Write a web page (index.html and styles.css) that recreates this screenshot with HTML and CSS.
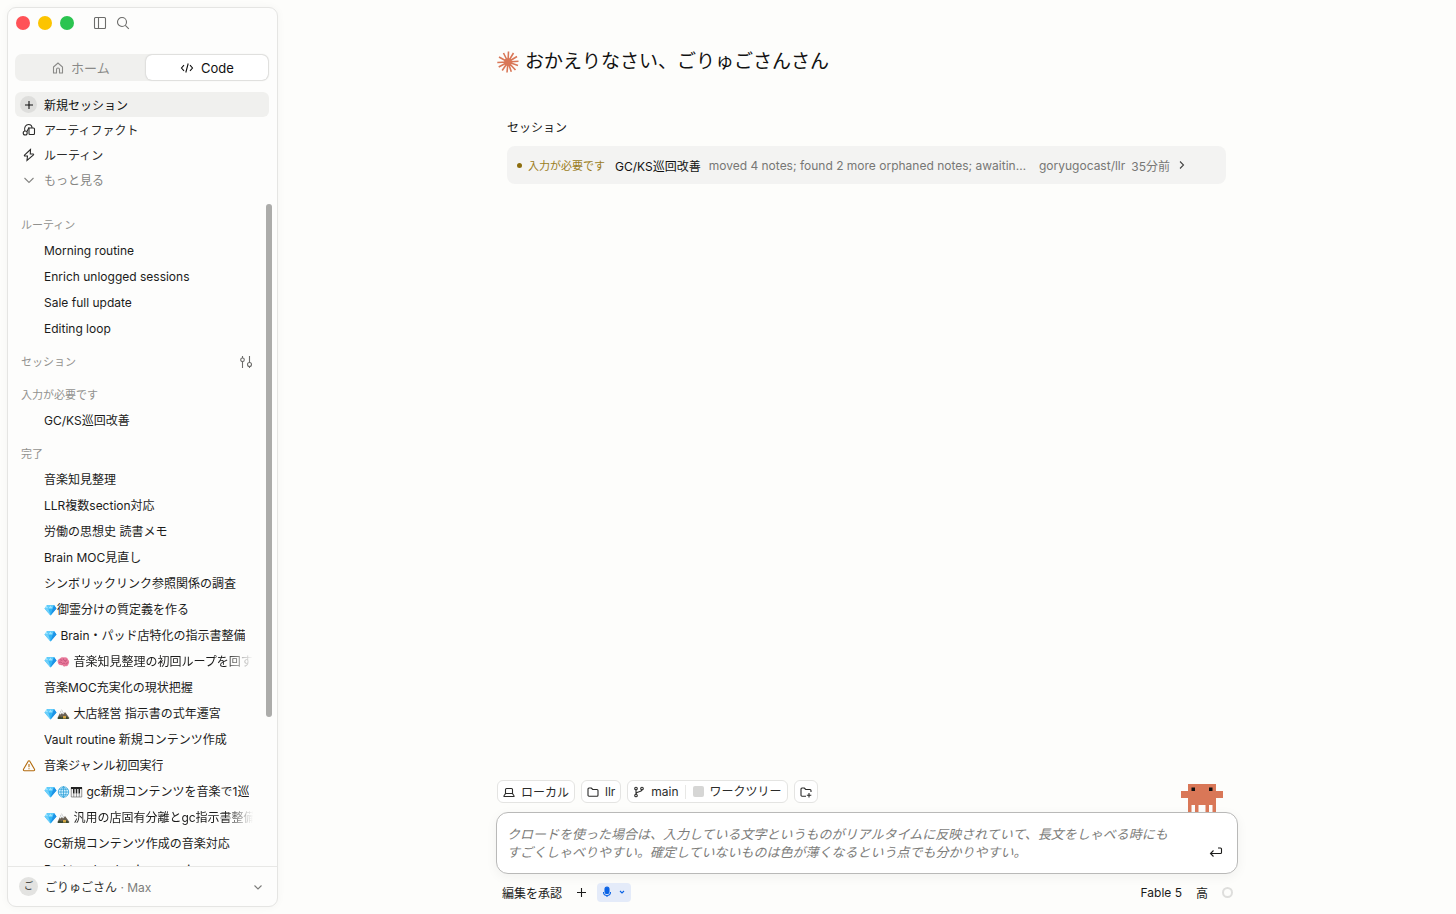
FILE: index.html
```html
<!DOCTYPE html>
<html lang="ja">
<head>
    <meta charset="UTF-8">
    <meta name="viewport" content="width=device-width, initial-scale=1.0">
    <title>Code</title>
    <link rel="stylesheet" href="styles.css">
</head>
<body>
    <!-- Shared emoji symbols -->
    <svg class="symbols" aria-hidden="true">
        <symbol id="gem" viewBox="0 0 24 24">
            <path fill="#31b5f5" d="M5 2h14l5 7L12 23 0 9z"/>
            <path fill="#9be4ff" d="M5 2l2.500 7H0zM12 2l4.500 7h-9z"/>
            <path fill="#62cdfb" d="M5 2h7L7.500 9zM12 2h7l-2.500 7z"/>
            <path fill="#1e93e6" d="M19 2l5 7h-7.500zM16.500 9H24L12 23z"/>
            <path fill="#6fd0fa" d="M0 9h7.500L12 23z"/>
        </symbol>
        <symbol id="brain" viewBox="0 0 24 24">
            <path fill="#e8799a" d="M1 14c-2-4 0-8 4-9 2-3 6-3 8-2 4-1 7 1 8 4 3 2 3 7 1 9-1 4-4 5-6 4-2 2-5 1-6-2-3 1-8 0-9-4z"/>
            <path fill="none" stroke="#b84870" stroke-width="1.500" d="M5 8c2-1 4 0 4 2M3 13c3-2 5 0 6 1M12 5c-1 3 1 4 3 4M19 8c-3 0-4 2-3 4M9 17c1-3 4-3 6-2M21 14c-2-1-4 0-4 3"/>
        </symbol>
        <symbol id="mountain" viewBox="0 0 24 24">
            <path fill="#6b6255" d="M0 20L8 3l5 8 2-3 9 12z"/>
            <path fill="#eef2f5" d="M8 3l5 8-2 2-2-3-3 3-2-1z"/>
            <path fill="#38472f" d="M0 22c2-6 6-6 8-3 4-5 10-4 16 3z"/>
            <path fill="#d2a544" d="M11 16h6v5h-6z"/>
        </symbol>
        <symbol id="globe" viewBox="0 0 24 24">
            <circle cx="12" cy="12" r="10.500" fill="#d5f2ff" stroke="#2a9fd8" stroke-width="1.500"/>
            <path fill="none" stroke="#2a9fd8" stroke-width="1.500" d="M12 1v22M1 12h22M3 6.500h18M3 17.500h18M12 1c-7 6-7 16 0 22M12 1c7 6 7 16 0 22"/>
        </symbol>
        <symbol id="piano" viewBox="0 0 24 24">
            <path fill="#f4f4f4" stroke="#444" d="M1.500 3h21v19h-21z"/>
            <path fill="#222" d="M1 2h22v4H1zM5 5h3v10H5zM10.500 5h3v10h-3zM16 5h3v10h-3z"/>
            <path stroke="#555" d="M6.500 15v7M12 15v7M17.500 15v7"/>
        </symbol>
    </svg>

    <div class="app">
        <aside class="sidebar">
            <div class="titlebar">
                <span class="light red"></span>
                <span class="light yellow"></span>
                <span class="light green"></span>
                <button class="icon-button panel-button" aria-label="サイドバー">
                    <svg width="14" height="14" viewBox="0 0 14 14"><rect x="1.500" y="1.500" width="11" height="11" rx="1"/><path d="M5.500 1.500v11"/></svg>
                </button>
                <button class="icon-button" aria-label="検索">
                    <svg width="14" height="14" viewBox="0 0 14 14"><circle cx="6" cy="6" r="4.500"/><path d="M9.300 9.300l3.500 3.500"/></svg>
                </button>
            </div>

            <div class="tabs">
                <button class="tab">
                    <svg width="12" height="12" viewBox="0 0 12 12"><path d="M1.500 5L6 1l4.500 4v6H7.500V7.500a1.500 1.500 0 0 0-3 0V11h-3z"/></svg>
                    ホーム
                </button>
                <button class="tab active">
                    <svg width="14" height="12" viewBox="0 0 14 12"><path d="M4 3.200L1.500 6 4 8.800M10 3.200L12.500 6 10 8.800M8.200 1.500L5.800 10.500"/></svg>
                    Code
                </button>
            </div>

            <nav class="nav">
                <a href="#" class="nav-item active">
                    <span class="nav-icon round"><svg width="10" height="10" viewBox="0 0 10 10"><path d="M5 1v8M1 5h8"/></svg></span>
                    新規セッション
                </a>
                <a href="#" class="nav-item">
                    <span class="nav-icon"><svg width="14" height="14" viewBox="0 0 14 14"><circle cx="3.200" cy="10" r="2"/><path d="M2.800 8C1.800 4 4 1.500 6.500 1.500S10 3 10 5M4.800 8.800L7 4.500"/><path d="M7 5h4.500a1 1 0 0 1 1 1v4.500a1 1 0 0 1-1 1H8a1 1 0 0 1-1-1z"/></svg></span>
                    アーティファクト
                </a>
                <a href="#" class="nav-item">
                    <span class="nav-icon"><svg width="14" height="14" viewBox="0 0 14 14"><path d="M8.500 1.500L2.500 7.200c-.3.300-.1.800.3.800h2.700L5 12.500l6.500-5.700c.3-.3.100-.8-.3-.8H8.300z"/></svg></span>
                    ルーティン
                </a>
                <button class="nav-item more">
                    <span class="nav-icon"><svg width="12" height="12" viewBox="0 0 12 12"><path d="M1.500 4L6 8.500 10.500 4"/></svg></span>
                    もっと見る
                </button>
            </nav>

            <div class="history">
                <div class="history-list">
                    <h2 class="group-title">ルーティン</h2>
                    <a href="#" class="entry"><span>Morning routine</span></a>
                    <a href="#" class="entry"><span>Enrich unlogged sessions</span></a>
                    <a href="#" class="entry"><span>Sale full update</span></a>
                    <a href="#" class="entry"><span>Editing loop</span></a>

                    <div class="group-header">
                        <h2 class="group-title">セッション</h2>
                        <button class="icon-button" aria-label="フィルター">
                            <svg width="14" height="14" viewBox="0 0 14 14"><path d="M3.500 1v2M3.500 6.500V13M10.500 1v6.500M10.500 11.500V13"/><circle cx="3.500" cy="4.800" r="1.800"/><circle cx="10.500" cy="9.500" r="2"/></svg>
                        </button>
                    </div>

                    <h3 class="group-title">入力が必要です</h3>
                    <a href="#" class="entry"><span>GC/KS巡回改善</span></a>

                    <h3 class="group-title">完了</h3>
                    <a href="#" class="entry"><span>音楽知見整理</span></a>
                    <a href="#" class="entry"><span>LLR複数section対応</span></a>
                    <a href="#" class="entry"><span>労働の思想史 読書メモ</span></a>
                    <a href="#" class="entry"><span>Brain MOC見直し</span></a>
                    <a href="#" class="entry"><span>シンボリックリンク参照関係の調査</span></a>
                    <a href="#" class="entry"><span><svg class="emoji"><use href="#gem"/></svg>御霊分けの質定義を作る</span></a>
                    <a href="#" class="entry"><span><svg class="emoji"><use href="#gem"/></svg> Brain・パッド店特化の指示書整備</span></a>
                    <a href="#" class="entry fade"><span><svg class="emoji"><use href="#gem"/></svg><svg class="emoji"><use href="#brain"/></svg> 音楽知見整理の初回ループを回す</span></a>
                    <a href="#" class="entry"><span>音楽MOC充実化の現状把握</span></a>
                    <a href="#" class="entry"><span><svg class="emoji"><use href="#gem"/></svg><svg class="emoji"><use href="#mountain"/></svg> 大店経営 指示書の式年遷宮</span></a>
                    <a href="#" class="entry"><span>Vault routine 新規コンテンツ作成</span></a>
                    <a href="#" class="entry">
                        <svg class="warning" width="14" height="14" viewBox="0 0 14 14"><path d="M6.200 2.200a1 1 0 0 1 1.600 0l4.700 8a1 1 0 0 1-.8 1.500H2.300a1 1 0 0 1-.8-1.500zM7 5v3.200M7 9.200v1"/></svg>
                        <span>音楽ジャンル初回実行</span>
                    </a>
                    <a href="#" class="entry"><span><svg class="emoji"><use href="#gem"/></svg><svg class="emoji"><use href="#globe"/></svg><svg class="emoji"><use href="#piano"/></svg> gc新規コンテンツを音楽で1巡</span></a>
                    <a href="#" class="entry fade"><span><svg class="emoji"><use href="#gem"/></svg><svg class="emoji"><use href="#mountain"/></svg> 汎用の店固有分離とgc指示書整備</span></a>
                    <a href="#" class="entry"><span>GC新規コンテンツ作成の音楽対応</span></a>
                    <a href="#" class="entry"><span>Pad teacher business review</span></a>
                </div>
                <div class="scroll-thumb"></div>
            </div>

            <button class="account">
                <span class="avatar">ご</span>
                <span>ごりゅごさん <span class="plan">· Max</span></span>
                <svg width="10" height="10" viewBox="0 0 10 10"><path d="M1.500 3.500L5 7l3.500-3.500"/></svg>
            </button>
        </aside>

        <main class="main">
            <div class="column">
                <h1 class="greeting">
                    <svg width="22" height="22" viewBox="-11 -11 22 22">
                        <circle r="3"/>
                        <path d="M0 0L.5-10.500M0 0L5.500-9M0 0L9-5.500M0 0L10.500-.8M0 0L10 3.500M0 0L7.500 8M0 0L3.300 9.800M0 0L-1 10.500M0 0L-5.800 8.500M0 0L-9.300 5M0 0L-10.700.5M0 0L-9-5M0 0L-4.500-9"/>
                    </svg>
                    おかえりなさい、ごりゅごさんさん
                </h1>

                <section class="sessions">
                    <h2>セッション</h2>
                    <a href="#" class="session-card">
                        <span class="dot"></span>
                        <span class="session-status">入力が必要です</span>
                        <span class="session-name">GC/KS巡回改善</span>
                        <span class="session-summary">moved 4 notes; found 2 more orphaned notes; awaitin…</span>
                        <span class="session-meta">goryugocast/llr</span>
                        <span class="session-meta">35分前</span>
                        <svg width="8" height="10" viewBox="0 0 8 10"><path d="M2 1.500L5.500 5 2 8.500"/></svg>
                    </a>
                </section>

                <form class="composer">
                    <div class="chips">
                        <button type="button" class="chip">
                            <svg width="12" height="12" viewBox="0 0 12 12"><path d="M2.500 7.500v-4a1 1 0 0 1 1-1h5a1 1 0 0 1 1 1v4l1.500 2.300v.7H1v-.7zM2.500 7.500h7"/></svg>
                            ローカル
                        </button>
                        <button type="button" class="chip">
                            <svg width="12" height="12" viewBox="0 0 12 12"><path d="M1 3a1 1 0 0 1 1-1h2.300L5.700 3.500H10a1 1 0 0 1 1 1v4.700a1 1 0 0 1-1 1H2a1 1 0 0 1-1-1z"/></svg>
                            llr
                        </button>
                        <div class="chip">
                            <button type="button" class="branch">
                                <svg width="12" height="12" viewBox="0 0 12 12"><circle cx="3" cy="2.500" r="1.300"/><circle cx="9" cy="2.500" r="1.300"/><circle cx="3" cy="9.500" r="1.300"/><path d="M3 3.800v4.400M9 3.800C9 6.500 3 5 3 8"/></svg>
                                main
                            </button>
                            <label class="worktree"><input type="checkbox"> ワークツリー</label>
                        </div>
                        <button type="button" class="chip" aria-label="フォルダーを追加">
                            <svg width="12" height="12" viewBox="0 0 12 12"><path d="M6 10.200H2a1 1 0 0 1-1-1V3a1 1 0 0 1 1-1h2.300L5.700 3.500H10a1 1 0 0 1 1 1V6M9 7v4.500M6.800 9.200h4.500"/></svg>
                        </button>
                        <svg class="mascot" width="42" height="28" viewBox="0 0 12 8">
                            <path fill="#d97757" d="M2 0h8v2h2v2h-2v4H9V6H8v2H7V6H5v2H4V6H3v2H2V4H0V2h2z"/>
                            <path fill="#111" d="M3 1h1v1H3zM8 1h1v1H8z"/>
                        </svg>
                    </div>

                    <div class="prompt">
                        <textarea rows="2" aria-label="プロンプト">クロードを使った場合は、入力している文字というものがリアルタイムに反映されていて、長文をしゃべる時にもすごくしゃべりやすい。確定していないものは色が薄くなるという点でも分かりやすい。</textarea>
                        <button class="send" aria-label="送信">
                            <svg width="14" height="14" viewBox="0 0 14 14"><path d="M9 3h2.500a1 1 0 0 1 1 1v3.500a1 1 0 0 1-1 1h-10M4.500 5.500l-3 3 3 3"/></svg>
                        </button>
                    </div>

                    <div class="toolbar">
                        <button type="button">編集を承認</button>
                        <button type="button" aria-label="追加"><svg width="11" height="11" viewBox="0 0 11 11"><path d="M5.500 1v9M1 5.500h9"/></svg></button>
                        <button type="button" class="mic" aria-label="音声入力">
                            <svg width="10" height="12" viewBox="0 0 10 12"><rect x="3" y="1" width="4" height="6.500" rx="2" fill="#0b63e5"/><path d="M1.500 6a3.500 3.500 0 0 0 7 0M5 9.500V11"/></svg>
                            <svg width="8" height="8" viewBox="0 0 8 8"><path d="M2 3l2 2 2-2"/></svg>
                        </button>
                        <button type="button" class="model">Fable 5</button>
                        <button type="button" class="effort">高</button>
                        <span class="usage"></span>
                    </div>
                </form>
            </div>
        </main>
    </div>
</body>
</html>
```
FILE: styles.css
```css
* {
    box-sizing: border-box;
}
body {
    margin: 0;
    font-family: Inter, "Noto Sans CJK JP", sans-serif;
    font-size: 12px;
    color: #1b1b1a;
    background-color: #fdfdfb;
}
button {
    font: inherit;
    color: inherit;
    background: none;
    border: none;
    padding: 0;
    cursor: pointer;
}
a {
    color: inherit;
    text-decoration: none;
}
h1, h2, h3 {
    margin: 0;
    font-weight: normal;
}
svg {
    flex-shrink: 0;
    fill: none;
    stroke: currentColor;
    stroke-width: 1.1;
}
.symbols {
    position: absolute;
    width: 0;
    height: 0;
}
.app {
    display: flex;
    height: 100vh;
}

/* Sidebar */
.sidebar {
    display: flex;
    flex-direction: column;
    width: 271px;
    flex-shrink: 0;
    margin: 7px 0 7px 7px;
    border: 1px solid #e5e5e3;
    border-radius: 9px;
    background-color: #fdfdfc;
    box-shadow: 0 0 8px rgba(0,0,0,0.04);
    overflow: hidden;
}
.titlebar {
    display: flex;
    align-items: center;
    gap: 8px;
    height: 30px;
    padding-left: 8px;
}
.light {
    width: 14px;
    height: 14px;
    border-radius: 50%;
}
.red {
    background-color: #ff5257;
}
.yellow {
    background-color: #fcc400;
}
.green {
    background-color: #2bc450;
}
.icon-button {
    display: flex;
    color: #6c6c6a;
}
.panel-button {
    margin: 0 1px 0 11px;
}
.tabs {
    display: grid;
    grid-template-columns: 17fr 16fr;
    margin: 16px 8px 0 7px;
    padding: 1px;
    border-radius: 7px;
    background-color: #f0f0ee;
    font-size: 13px;
}
.tab {
    display: flex;
    align-items: center;
    justify-content: center;
    gap: 7px;
    height: 25px;
    border-radius: 6px;
    color: #8a8a88;
}
.tab.active {
    color: #111;
    background-color: #fff;
    box-shadow: 0 0 2px rgba(0,0,0,0.25);
}
.nav {
    margin: 11px 8px 0 7px;
}
.nav-item {
    display: flex;
    align-items: center;
    gap: 7px;
    width: 100%;
    height: 25px;
    padding-left: 5px;
    border-radius: 6px;
    color: #2b2b2a;
}
.nav-item.active {
    color: #111;
    background-color: #f0f0ee;
}
.nav-item.more {
    color: #858583;
}
.nav-icon {
    display: flex;
    align-items: center;
    justify-content: center;
    width: 17px;
    height: 17px;
}
.round {
    border-radius: 50%;
    background-color: #dededc;
}
.history {
    position: relative;
    flex: 1;
    min-height: 0;
    margin-top: 8px;
}
.history-list {
    height: 100%;
    padding: 12px 24px 0 13px;
    overflow: hidden;
}
.scroll-thumb {
    position: absolute;
    top: 4px;
    right: 5px;
    width: 6px;
    height: 77%;
    border-radius: 3px;
    background-color: #acacaa;
}
.group-title {
    height: 26px;
    font-size: 11px;
    line-height: 26px;
    color: #92928f;
}
.entry + .group-title, .entry + .group-header, .group-header + .group-title {
    margin-top: 7px;
}
.group-header {
    display: flex;
    align-items: center;
    justify-content: space-between;
}
.entry {
    display: flex;
    align-items: center;
    position: relative;
    height: 26px;
    padding-left: 23px;
    line-height: 26px;
    white-space: nowrap;
}
.entry span {
    overflow: hidden;
}
.fade span {
    -webkit-mask-image: linear-gradient(to left, transparent, #000 28px);
    mask-image: linear-gradient(to left, transparent, #000 28px);
}
.emoji {
    width: 13px;
    height: 12px;
    vertical-align: -2px;
    stroke: none;
}
.warning {
    position: absolute;
    left: 1px;
    color: #b26a0c;
}
.account {
    display: flex;
    align-items: center;
    gap: 7px;
    height: 40px;
    padding: 0 14px 0 11px;
    border-top: 1px solid #e8e8e6;
    color: #2b2b2a;
}
.account svg {
    margin-left: auto;
    color: #7d7d7b;
}
.avatar {
    width: 19px;
    height: 19px;
    border-radius: 50%;
    font-size: 9px;
    line-height: 18px;
    background-color: #e3e3e1;
}
.plan {
    color: #7d7d7b;
}

/* Main area */
.main {
    display: flex;
    flex: 1;
    justify-content: center;
    min-width: 0;
}
.column {
    display: flex;
    flex-direction: column;
    width: 100%;
    max-width: 742px;
    padding: 45px 0 12px;
}
.greeting {
    display: flex;
    align-items: center;
    gap: 6px;
    height: 34px;
    padding-left: 1px;
    font-size: 19px;
    line-height: 28px;
    color: #111;
}
.greeting svg {
    color: #d97757;
    stroke-width: 1.6;
}
.greeting circle {
    fill: currentColor;
}
.sessions {
    padding: 40px 12px 0 11px;
}
.sessions h2 {
    height: 27px;
    font-size: 12px;
    line-height: 18px;
}
.session-card {
    display: flex;
    align-items: center;
    height: 38px;
    padding: 0 40px 0 10px;
    border-radius: 8px;
    background-color: #f3f3f2;
    color: #777775;
    white-space: nowrap;
}
.dot {
    width: 5px;
    height: 5px;
    flex-shrink: 0;
    margin-right: 6px;
    border-radius: 50%;
    background-color: #8c6d0d;
}
.session-status {
    margin-right: 10px;
    font-size: 11px;
    color: #9b7d1c;
}
.session-name {
    margin-right: 8px;
    color: #111;
}
.session-summary {
    flex: 1;
    min-width: 0;
    overflow: hidden;
    text-overflow: ellipsis;
}
.session-meta {
    margin-left: 6px;
}
.session-card svg {
    margin-left: 8px;
    color: #444;
}
.composer {
    margin-top: auto;
}
.chips {
    display: flex;
    align-items: center;
    gap: 6px;
    position: relative;
    padding: 0 1px;
    margin-bottom: 9px;
}
.chip {
    display: flex;
    align-items: center;
    gap: 6px;
    height: 23px;
    padding: 0 5px;
    border: 1px solid #e4e4e2;
    border-radius: 6px;
    background-color: #fff;
    color: #2b2b2a;
}
.branch {
    display: flex;
    align-items: center;
    gap: 6px;
}
.worktree {
    display: flex;
    align-items: center;
    gap: 6px;
    padding-left: 7px;
    border-left: 1px solid #e8e8e6;
    line-height: 14px;
}
.worktree input {
    appearance: none;
    width: 11px;
    height: 11px;
    margin: 0;
    border-radius: 2px;
    background-color: #d6d6d5;
}
.mascot {
    position: absolute;
    right: 15px;
    bottom: -9px;
    stroke: none;
}
.prompt {
    display: flex;
    align-items: flex-end;
    padding: 12px 14px 12px 10px;
    border: 1px solid #b9b9b8;
    border-radius: 12px;
    background-color: #fff;
    box-shadow: 0 3px 12px rgba(0,0,0,0.05);
}
.prompt textarea {
    flex: 1;
    height: 36px;
    padding: 0 32px 0 0;
    border: none;
    outline: none;
    resize: none;
    overflow: hidden;
    font: italic 13px/18px Inter, "Noto Sans CJK JP", sans-serif;
    color: #7d7d7b;
    background: none;
}
.send {
    display: flex;
    padding-bottom: 2px;
}
.toolbar {
    display: flex;
    align-items: center;
    height: 20px;
    margin-top: 8px;
    padding: 0 5px 0 6px;
}
.toolbar button {
    display: flex;
    align-items: center;
    margin-right: 14px;
}
.toolbar button + .mic {
    gap: 6px;
    height: 19px;
    margin-left: -4px;
    padding: 0 5px;
    border-radius: 4px;
    color: #0b63e5;
    background-color: #e4ebf9;
}
.toolbar .model {
    margin-left: auto;
}
.usage {
    width: 11px;
    height: 11px;
    border: 2px solid #dededc;
    border-radius: 50%;
}
```
